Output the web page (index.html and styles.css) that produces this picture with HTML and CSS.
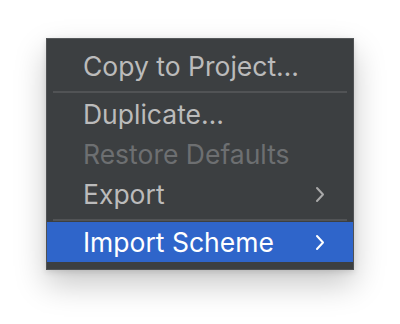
FILE: index.html
```html
<!DOCTYPE html>
<html lang="en">
<head>
    <meta charset="UTF-8">
    <meta name="viewport" content="width=device-width, initial-scale=1.0">
    <link rel="stylesheet" href="styles.css">
</head>
<body>
    <div class="stage">
        <div class="menu">
            <div class="menu-item">Copy to Project…</div>
            <div class="menu-separator"></div>
            <div class="menu-item">Duplicate…</div>
            <div class="menu-item disabled">Restore Defaults</div>
            <div class="menu-item">
                <span>Export</span>
                <svg class="chevron" width="10" height="17" viewBox="0 0 10 17">
                    <path d="M2 2 L8 8.5 L2 15" />
                </svg>
            </div>
            <div class="menu-separator"></div>
            <div class="menu-item selected">
                <span>Import Scheme</span>
                <svg class="chevron" width="10" height="17" viewBox="0 0 10 17">
                    <path d="M2 2 L8 8.5 L2 15" />
                </svg>
            </div>
        </div>
    </div>
</body>
</html>
```

FILE: styles.css
```css
body {
    margin: 0;
    background: #ffffff;
    font-family: Inter, "Noto Sans", sans-serif;
}

.stage {
    width: 400px;
    height: 324px;
    padding: 38px 0 0 46px;
    box-sizing: border-box;
}

.menu {
    width: 308px;
    box-sizing: border-box;
    padding: 7px 0;
    background: #3c3f41;
    border: 1px solid #505254;
    border-top-color: #56595b;
    box-shadow: 0 14px 30px rgba(0, 0, 0, 0.22), 0 2px 6px rgba(0, 0, 0, 0.12);
}

.menu-item {
    height: 40px;
    display: flex;
    align-items: center;
    justify-content: space-between;
    padding: 0 28px 0 36px;
    font-size: 26.5px;
    line-height: 40px;
    color: #bbbbbb;
}

.menu-item.disabled {
    color: #6d6f71;
}

.menu-item.selected {
    background: #2f65ca;
    color: #ffffff;
}

.chevron path {
    fill: none;
    stroke: #a9a9a9;
    stroke-width: 2;
    stroke-linecap: round;
    stroke-linejoin: round;
}

.selected .chevron path {
    stroke: #ffffff;
}

.menu-separator {
    height: 2px;
    margin: 5px 6px 1px;
    background: #515355;
}
```
